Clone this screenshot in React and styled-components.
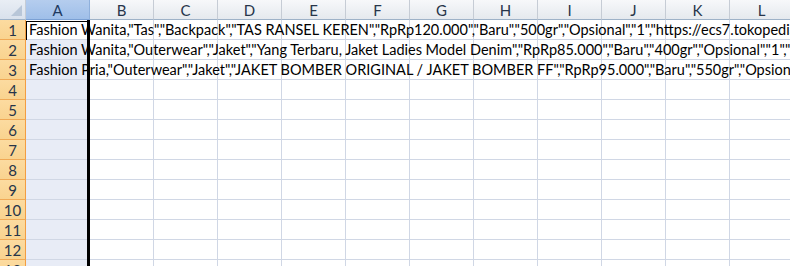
import React from 'react';
import styled, { createGlobalStyle } from 'styled-components';

const GlobalStyle = createGlobalStyle`
  html, body {
    margin: 0;
    padding: 0;
    background: #ffffff;
    overflow: hidden;
  }
  body {
    font-family: Lato, "Open Sans", "Liberation Sans", sans-serif;
  }
`;

const COLS = ['A', 'B', 'C', 'D', 'E', 'F', 'G', 'H', 'I', 'J', 'K', 'L', 'M'];
const ROWS = 13;

const data = {
  1: 'Fashion Wanita,"Tas","Backpack","TAS RANSEL KEREN","RpRp120.000","Baru","500gr","Opsional","1","https://ecs7.tokopedia.net/img/cache/700/product-1/2017/9/12/tas-ransel.jpg"',
  2: 'Fashion Wanita,"Outerwear","Jaket","Yang Terbaru, Jaket Ladies Model Denim","RpRp85.000","Baru","400gr","Opsional","1","https://ecs7.tokopedia.net/img/cache/700/product-1/jaket.jpg"',
  3: 'Fashion Pria,"Outerwear","Jaket","JAKET BOMBER ORIGINAL / JAKET BOMBER FF","RpRp95.000","Baru","550gr","Opsional","1","https://ecs7.tokopedia.net/img/cache/700/product-1/bomber.jpg"',
};

const Sheet = styled.div`
  position: relative;
  width: 790px;
  height: 266px;
  overflow: hidden;
  display: flex;
  flex-direction: column;
`;

const Row = styled.div`
  display: flex;
  height: 20px;
  flex: none;
`;

const Corner = styled.div`
  position: relative;
  box-sizing: border-box;
  width: 26px;
  height: 20px;
  flex: none;
  background: linear-gradient(#e9eef5, #d9e1ec);
  border-right: 1px solid #c5ccd6;
  border-bottom: 1px solid #9eb2c8;
`;

const CornerTriangle = styled.div`
  position: absolute;
  right: 3px;
  bottom: 3px;
  width: 0;
  height: 0;
  border-left: 11px solid transparent;
  border-bottom: 11px solid #b8c6d8;
`;

const ColHeader = styled.div`
  box-sizing: border-box;
  width: 64px;
  height: 20px;
  flex: none;
  display: flex;
  align-items: center;
  justify-content: center;
  font-size: 15px;
  color: ${p => (p.$selected ? '#1f3a5f' : '#27354a')};
  background: ${p =>
    p.$selected
      ? 'linear-gradient(#b5cdee, #9fbfe9)'
      : 'linear-gradient(#f7f8fa, #e5e9ee)'};
  border-right: 1px solid ${p => (p.$selected ? '#8fb0dc' : '#c6ccd5')};
  border-bottom: 1px solid ${p => (p.$selected ? '#7aa0d4' : '#9eb2c8')};
`;

const RowHeader = styled.div`
  box-sizing: border-box;
  width: 26px;
  height: 20px;
  flex: none;
  display: flex;
  align-items: center;
  justify-content: center;
  font-size: 15px;
  color: #27354a;
  background: linear-gradient(#fcdba0, #f9d38f);
  border-right: 1px solid #f29d42;
  border-bottom: 1px solid #f0a955;
`;

const Cell = styled.div`
  box-sizing: border-box;
  width: 64px;
  height: 20px;
  flex: none;
  background: ${p => (p.$selected ? '#e8ecf6' : 'transparent')};
  border-right: 1px solid #d0d7e5;
  border-bottom: 1px solid #d0d7e5;
`;

const CellText = styled.div`
  position: relative;
  z-index: 1;
  padding-left: 3px;
  line-height: 20px;
  font-size: 14.5px;
  color: #000000;
  white-space: nowrap;
`;

const SelectionEdge = styled.div`
  position: absolute;
  z-index: 2;
  left: 87px;
  top: 20px;
  width: 3px;
  bottom: 0;
  background: #000000;
`;

const ActiveCell = styled.div`
  position: absolute;
  z-index: 2;
  left: 26px;
  top: 21px;
  width: 62px;
  height: 18px;
  border-left: 1px solid #000000;
  border-top: 1px solid #000000;
`;

export default function App() {
  return (
    <>
      <GlobalStyle />
      <Sheet>
        <Row>
          <Corner>
            <CornerTriangle />
          </Corner>
          {COLS.map(c => (
            <ColHeader key={c} $selected={c === 'A'}>
              {c}
            </ColHeader>
          ))}
        </Row>
        {Array.from({ length: ROWS }, (_, i) => i + 1).map(r => (
          <Row key={r}>
            <RowHeader>{r}</RowHeader>
            {COLS.map(c => (
              <Cell key={c} $selected={c === 'A' && r !== 1}>
                {c === 'A' && data[r] && <CellText>{data[r]}</CellText>}
              </Cell>
            ))}
          </Row>
        ))}
        <ActiveCell />
        <SelectionEdge />
      </Sheet>
    </>
  );
}
